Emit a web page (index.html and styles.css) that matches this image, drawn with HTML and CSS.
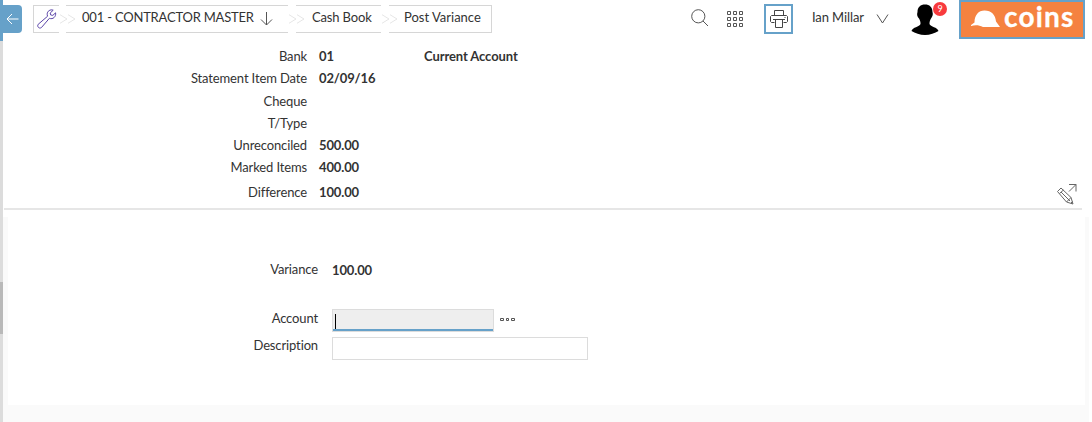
FILE: index.html
```html
<!DOCTYPE html>
<html lang="en">
<head>
<meta charset="utf-8">
<title>Post Variance</title>
<link rel="stylesheet" href="styles.css">
</head>
<body>
<div class="app">
  <aside class="rail"><div class="rail-accent"></div><div class="rail-thumb"></div></aside>
  <main class="main">
    <header class="topbar">
      <button class="back" aria-label="Back"><svg width="13" height="12" viewBox="0 0 13 12"><path d="M12.5 6H1M6 1 1 6l5 5"/></svg></button>
      <nav class="crumbs">
        <a class="crumb crumb-tools"><svg width="20" height="20" viewBox="0 0 20 20"><path d="M16.2 1.2C13.5 0 10 2.1 10.2 5.3L10.5 7.3 1.2 15.3C-.3 17.3 2 20.2 4.4 18.6L12.4 9.3C16 10.8 19.3 7.500 18.6 3.800L15.800 6.400 13.600 5.900 13.200 4Z"/></svg></a>
        <svg class="sep" width="18" height="10" viewBox="0 0 18 10"><path d="M1 .7 8 5 1 9.3M9 .7 16 5 9 9.3"/></svg>
        <a class="crumb crumb-company">001 - CONTRACTOR MASTER<svg class="down" width="13" height="14" viewBox="0 0 13 14"><path d="M6.500 0v13M1 7.500l5.500 5.500L12 7.500"/></svg></a>
        <svg class="sep" width="18" height="10" viewBox="0 0 18 10"><path d="M1 .7 8 5 1 9.3M9 .7 16 5 9 9.3"/></svg>
        <a class="crumb crumb-book">Cash Book</a>
        <svg class="sep" width="18" height="10" viewBox="0 0 18 10"><path d="M1 .7 8 5 1 9.3M9 .7 16 5 9 9.3"/></svg>
        <a class="crumb crumb-post">Post Variance</a>
      </nav>
      <div class="tools">
        <svg class="search" width="18" height="18" viewBox="0 0 18 18"><circle cx="7.3" cy="7.3" r="6.6"/><path d="m12 12 5 5"/></svg>
        <svg class="grid" width="16" height="16" viewBox="0 0 16 16"><path d="M.5.5h3v3h-3zM6.500.5h3v3h-3zM12.500.5h3v3h-3zM.5 6.500h3v3h-3zM6.500 6.500h3v3h-3zM12.500 6.500h3v3h-3zM.5 12.500h3v3h-3zM6.500 12.500h3v3h-3zM12.500 12.500h3v3h-3z"/></svg>
        <button class="print" aria-label="Print"><svg width="18" height="18" viewBox="0 0 18 18"><path d="M4.500 5.500v-5h9v5M4.500 12.500h-3l-1-1v-5l1-1h15l1 1v5l-1 1h-3M3 9.500h12M5.500 9.500v8h7v-8M14.500 7.500h1"/></svg></button>
        <span class="user">Ian Millar</span>
        <svg class="chev" width="13" height="10" viewBox="0 0 13 10"><path d="m1 .5 5.500 8.500L12 .5"/></svg>
        <div class="avatar"><svg width="28" height="31" viewBox="0 0 28 31"><path d="M6.500 8C6.500 3 9.500.5 14 .5S21.500 3 21.500 8C22.500 11 21 13 20 14.500c-1 2-1.500 3-1.500 5.500 1 3 8 3 9 7C24 29 19 31 14 31S4 29 .5 27c1-4 8-4 9-7 0-2.500-.5-3.500-1.500-5.500C6.500 13 5.500 11 6.500 8Z"/></svg><span class="badge">9</span></div>
        <div class="logo"><svg width="29" height="18" viewBox="0 0 29 18"><path d="M0 15 3.500 12.500C3.500 5 7.500 .5 13.500 .5 20.500 .5 24.500 5 25 11.500L29 17H12C8 15 4 15 0 16Z"/></svg><span>coins</span></div>
      </div>
    </header>
    <section class="summary">
      <dl class="facts">
        <dt>Bank</dt><dd>01</dd><dd class="name">Current Account</dd>
        <dt>Statement Item Date</dt><dd>02/09/16</dd>
        <dt>Cheque</dt><dd></dd>
        <dt>T/Type</dt><dd></dd>
        <dt>Unreconciled</dt><dd>500.00</dd>
        <dt>Marked Items</dt><dd>400.00</dd>
        <dt>Difference</dt><dd>100.00</dd>
      </dl>
      <svg class="edit" width="20" height="21" viewBox="0 0 20 21"><path d="M12 .5h7v7M19 .5l-7 7M.5 7.500 4 4 14 13.500 16 20l-6.500-2ZM2.500 9.500l4-3.500M4 8l9 9M9.500 18l4.500-4.500M14 19l1.500-1.500"/></svg>
    </section>
    <section class="panel">
      <form class="form">
        <div class="row row-variance"><label>Variance</label><strong>100.00</strong></div>
        <div class="row row-account"><label>Account</label><div class="input focused"><i class="caret"></i></div><svg class="more" width="15" height="4" viewBox="0 0 15 4"><path d="M.5.5h3v2h-3zM6.500.5h2v2h-2zM11.500.5h3v2h-3z"/></svg></div>
        <div class="row row-description"><label>Description</label><div class="input wide"></div></div>
      </form>
    </section>
  </main>
</div>
</body>
</html>
```
FILE: styles.css
```css
* { box-sizing: border-box; }
body { margin: 0; background: #fff; color: #333; font: 13px/16px Lato, sans-serif; }
svg { display: block; fill: none; stroke: #555; flex: none; }
button { border: 0; padding: 0; background: none; }
.app { display: flex; height: 422px; overflow: hidden; }
.rail { width: 3px; background: #dcdcdc; display: flex; flex-direction: column; }
.rail-accent { height: 41px; background: #66a1c9; margin-bottom: 241px; }
.rail-thumb { height: 52px; background: #b9b9b9; }
.main { width: 1086px; display: flex; flex-direction: column; }
.topbar { height: 44px; display: flex; align-items: flex-start; }
.back { width: 19px; height: 28px; margin-top: 5px; background: #66a1c9; border-radius: 0 4px 4px 0; display: flex; align-items: center; justify-content: center; }
.back svg { stroke: #fff; }
.crumbs { display: flex; margin: 5px 0 0 11px; height: 28px; }
.crumb { border: solid #d6d6d6; border-width: 1px 0; display: flex; height: 28px; line-height: 23px; white-space: nowrap; }
.crumb-tools { width: 26px; border-left-width: 1px; padding: 3px 0 0 3px; }
.crumb-tools svg { stroke: #5b45a8; }
.crumb-company { width: 222px; padding-left: 16px; letter-spacing: -.2px; }
.crumb-book { width: 85px; padding-left: 16px; letter-spacing: -.15px; margin-left: 1px; }
.crumb-post { width: 103px; padding-left: 15px; border-right-width: 1px; margin-left: 1px; }
.sep { stroke: #e6e6e6; margin: 9px -11px 0 0; }
.down { margin: 6px 0 0 6px; }
.tools { display: flex; margin-left: auto; margin-right: 4px; }
.search { margin: 9px 18px 0 0; }
.grid { margin: 11px 21px 0 0; }
.print { width: 29px; height: 30px; margin: 4px 19px 0 0; border: 2px solid #66a1c9; display: flex; align-items: center; justify-content: center; }
.print svg { stroke: #444; }
.user { margin: 9px 11px 0 0; width: 53px; white-space: nowrap; letter-spacing: -.1px; }
.chev { margin: 14px 22px 0 0; }
.avatar { position: relative; width: 36px; margin: 4px 12px 0 0; }
.avatar svg { fill: #000; stroke: none; }
.badge { position: absolute; left: 22px; top: -2px; width: 14px; height: 14px; border-radius: 50%; background: #f83a3d; color: #fff; font: 9px/14px Lato, sans-serif; text-align: center; }
.logo { width: 126px; height: 39px; background: #f58240; border: 2px solid #66a1c9; display: flex; padding: 8px 0 0 10px; color: #fff; }
.logo svg { fill: #fff; stroke: none; }
.logo span { font: 700 28px/24px Lato, sans-serif; -webkit-text-stroke: .3px #fff; margin: -6px 0 0 4px; letter-spacing: 1.2px; }
.summary { height: 166px; margin: 0 7px 0 1px; border-bottom: 2px solid #e6e6e6; display: flex; align-items: flex-start; }
.facts { margin: 4px 0 0; display: grid; grid-template-columns: 303px 93px auto; grid-template-rows: 22px 23px 22px 22px 22px 25px 22px; column-gap: 12px; letter-spacing: -.13px; }
.facts dt { grid-column: 1; text-align: right; }
.facts dd { grid-column: 2; margin: 0; font-weight: bold; }
.facts .name { grid-column: 3; letter-spacing: -.1px; }
.edit { margin: 140px 5px 0 auto; stroke: #666; }
.panel { height: 205px; margin-top: 7px; background: #fafafa; padding: 0 4px 17px 5px; }
.form { background: #fff; height: 188px; padding-top: 44px; letter-spacing: -.13px; }
.row { display: flex; align-items: flex-start; }
.row label { width: 310px; text-align: right; margin-right: 14px; }
.row-variance { height: 48px; }
.row-variance strong { margin-top: 1px; }
.row-account { height: 28px; }
.row-account label { margin-top: 1px; }
.input { width: 162px; height: 23px; border: 1px solid #dcdcdc; }
.focused { background: #eee; padding: 4px 0 0 2px; box-shadow: inset 0 -2px #66a1c9; }
.caret { display: block; width: 1px; height: 15px; background: #000; }
.wide { width: 256px; }
.more { margin: 9px 0 0 6px; }
```
